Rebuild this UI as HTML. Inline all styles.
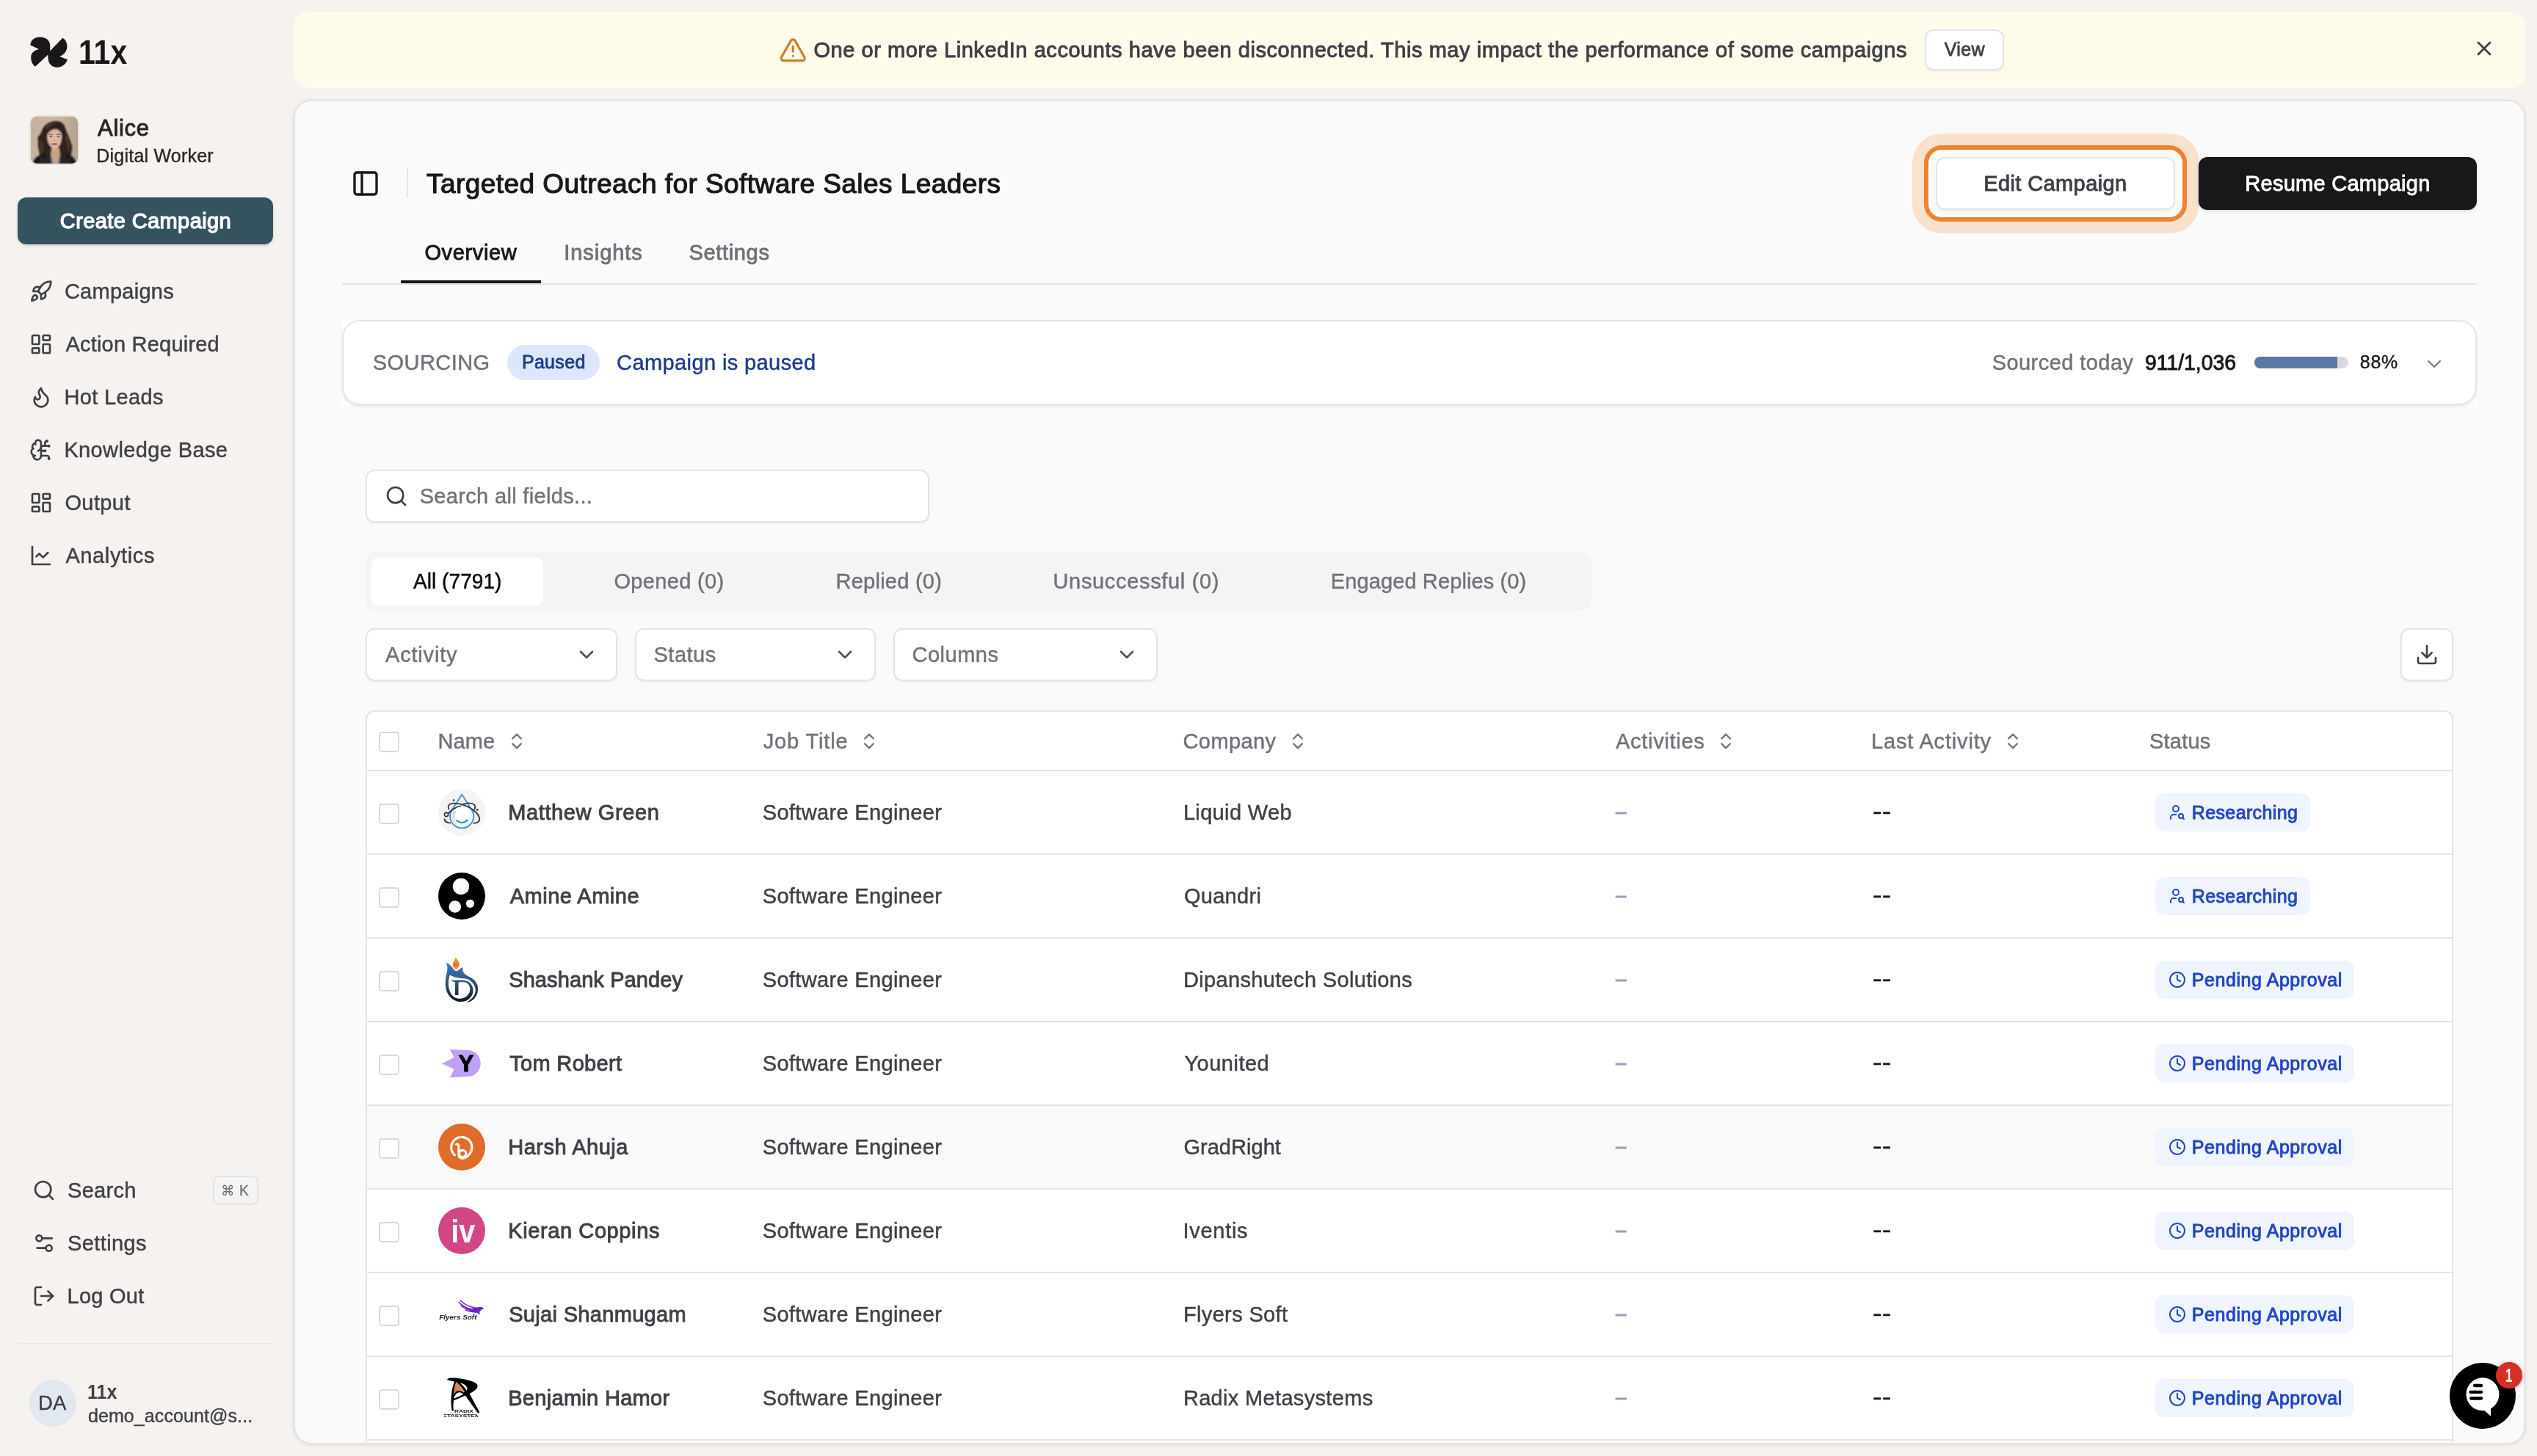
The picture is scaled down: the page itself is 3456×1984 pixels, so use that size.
<!DOCTYPE html>
<html lang="en"><head><meta charset="utf-8"><title>11x - Targeted Outreach for Software Sales Leaders</title>
<style>
*{margin:0;padding:0}
html,body{width:3456px;height:1984px;overflow:hidden;background:#f5f2ef;font-family:"Liberation Sans",sans-serif;}
#app{position:relative;width:3456px;height:1984px;overflow:hidden;will-change:transform}
.t{position:absolute;white-space:nowrap;line-height:1;font-weight:400}
h1{font-size:inherit;font-weight:inherit}
button{border:0;padding:0;font:inherit}
svg{display:block;overflow:visible}
</style></head>
<body><div id="app">
<aside>
<svg style="position:absolute;left:0px;top:0px;" width="120" height="120" viewBox="0 0 120 120"><path fill="#1a1718" d="M41.4,61.6 C41.4,55 47,50.6 54.6,50.6 C62,50.6 68.2,55 68.2,62 L68.2,69.5 L85.3,51.8 C89.5,54 91.4,58.5 91.4,63.7 C91.4,69 87.5,74.5 81.1,77 L91.9,81.1 C90,87.5 84.5,91.9 77.8,91.9 C70.5,91.9 65.4,86.5 65.4,77.8 L65.4,74.5 L48,90.7 C44,88 42.2,83 42.2,77.8 C42.2,72.5 46.5,68.5 53,67 Z"/></svg>
<span class="t" style="left:106.68px;top:47.00px;font-size:47px;color:#1a1718;font-weight:700;transform:scaleX(0.8736);transform-origin:0 0;">11x</span>
<svg style="position:absolute;left:40px;top:157px;" width="68" height="68" viewBox="0 0 68 68"><defs><linearGradient id="abg" x1="0" y1="0" x2="1" y2="0"><stop offset="0" stop-color="#c4b19d"/><stop offset=".5" stop-color="#cbb9a6"/><stop offset="1" stop-color="#b3a28e"/></linearGradient><filter id="ab" x="-20%" y="-20%" width="140%" height="140%"><feGaussianBlur stdDeviation="0.9"/></filter><filter id="ab2" x="-20%" y="-20%" width="140%" height="140%"><feGaussianBlur stdDeviation="0.5"/></filter><clipPath id="ac"><rect x="2" y="2" width="64" height="64" rx="8.5"/></clipPath></defs><rect x="0" y="0" width="68" height="68" rx="10.5" fill="#e9e0d6"/><g clip-path="url(#ac)"><g transform="translate(2 2)"><rect width="64" height="64" fill="url(#abg)"/><g filter="url(#ab)"><path fill="#2f211b" d="M34,6 C41,5.5 46,10 47.5,17 C49,23 52,26 53.5,32 C55,37 57,40 56,45 C55.5,50 54,56 53,64 L12,64 C11,58 12,54 11.5,49 C11,44 9,40 10,34 C9,30 9,27 12,25 C13.5,24 14,21 15.5,18 C18,11 25,6.5 34,6 Z"/><path fill="#4f372b" d="M13,30 C12,38 14,46 13,54 C16,50 17,44 17,38 Z M49,24 C52,32 54,40 52,50 C50,44 49,36 47,30 Z M20,14 C24,9 31,8 36,9 C30,10 25,13 22,18 Z"/><path fill="#0e1730" d="M3,64 C4,57 8,54 14,52 L26,49 L30,64 Z M61.5,64 C61,57 57,54 51,52 L40,49 L37,64 Z"/><path fill="#caa189" d="M28.5,42 L38.5,42 L40,52 L37,64 L30,64 L27,52 Z"/><path fill="#3d79a6" d="M26.5,53 L30,64 L27.5,64 Z M40.5,53 L37.5,64 L40,64 Z"/><path fill="#2f211b" d="M12,46 C13,52 17,58 22,64 L12,64 Z M27,46 C25,52 26,58 28,64 L20,64 C18,58 19,50 22,44 Z M40,45 C42,52 41,58 39,64 L48,64 C50,58 49,50 46,44 Z M54,46 C53,53 50,59 46,64 L54,64 Z"/><path fill="#dbb8a3" d="M32.5,14.5 C38,14.5 41.5,19 42,26 C42.3,32 41,37 38,40.5 C36,42.8 34,43.5 32.5,43.5 C31,43.5 29,42.8 27,40.5 C24,37 22,32 22.3,26 C22.8,19 27,14.5 32.5,14.5 Z"/><path fill="#2f211b" d="M21,27 C20.5,20 24,13 32,12.5 C40,12.5 44,19 43.5,27 C42,22 39,18 34,17 C28,17 23.5,21 21,27 Z"/></g><g filter="url(#ab2)"><ellipse cx="27.3" cy="26.8" rx="2" ry=".9" fill="#4a4a55"/><ellipse cx="37.4" cy="26.8" rx="2" ry=".9" fill="#4a4a55"/><path d="M24.5,24.6 Q27,23.4 30,24.4 M35,24.4 Q38,23.4 40.5,24.6" stroke="#3a2a22" stroke-width=".8" fill="none"/><ellipse cx="32.2" cy="37.4" rx="4.2" ry="1.3" fill="#b5626b"/><ellipse cx="32.4" cy="32.5" rx="1.4" ry=".8" fill="#c79a86"/></g></g></g></svg>
<span class="t" style="left:133.00px;top:159.00px;font-size:31px;color:#27272a;letter-spacing:0.700px;-webkit-text-stroke:0.96px #27272a;">Alice</span>
<span class="t" style="left:131.30px;top:200.00px;font-size:25px;color:#27272a;letter-spacing:0.215px;-webkit-text-stroke:0.39px #27272a;">Digital Worker</span>
<button style="position:absolute;left:24px;top:269px;width:348px;height:64px;border-radius:12px;background:#35525f;box-shadow:0 2px 4px rgba(0,0,0,.14);"></button>
<span class="t" style="left:81.80px;top:287.00px;font-size:29px;color:#ffffff;letter-spacing:0.400px;-webkit-text-stroke:1.25px #ffffff;">Create Campaign</span>
<nav>
<svg style="position:absolute;left:40px;top:381px;" width="32" height="32" viewBox="0 0 24 24" fill="none" stroke="#3f3f46" stroke-width="2" stroke-linecap="round" stroke-linejoin="round"><path d="M4.5 16.5c-1.5 1.26-2 5-2 5s3.74-.5 5-2c.71-.84.7-2.13-.09-2.91a2.18 2.18 0 0 0-2.91-.09z"/><path d="m12 15-3-3a22 22 0 0 1 2-3.95A12.88 12.88 0 0 1 22 2c0 2.72-.78 7.5-6 11a22.35 22.35 0 0 1-4 2z"/><path d="M9 12H4s.55-3.03 2-4c1.62-1.08 5 0 5 0"/><path d="M12 15v5s3.03-.55 4-2c1.08-1.62 0-5 0-5"/></svg>
<span class="t" style="left:87.90px;top:383.00px;font-size:29px;color:#3f3f46;letter-spacing:0.262px;-webkit-text-stroke:0.45px #3f3f46;">Campaigns</span>
<svg style="position:absolute;left:40px;top:453px;" width="32" height="32" viewBox="0 0 24 24" fill="none" stroke="#3f3f46" stroke-width="2" stroke-linecap="round" stroke-linejoin="round"><rect width="7" height="9" x="3" y="3" rx="1"/><rect width="7" height="5" x="14" y="3" rx="1"/><rect width="7" height="9" x="14" y="12" rx="1"/><rect width="7" height="5" x="3" y="16" rx="1"/></svg>
<span class="t" style="left:89.40px;top:455.00px;font-size:29px;color:#3f3f46;letter-spacing:0.214px;-webkit-text-stroke:0.45px #3f3f46;">Action Required</span>
<svg style="position:absolute;left:40px;top:525px;" width="32" height="32" viewBox="0 0 24 24" fill="none" stroke="#3f3f46" stroke-width="2" stroke-linecap="round" stroke-linejoin="round"><path d="M8.5 14.5A2.5 2.5 0 0 0 11 12c0-1.38-.5-2-1-3-1.072-2.143-.224-4.054 2-6 .5 2.5 2 4.9 4 6.5 2 1.6 3 3.5 3 5.5a7 7 0 1 1-14 0c0-1.153.433-2.294 1-3a2.5 2.5 0 0 0 2.5 2.5z"/></svg>
<span class="t" style="left:87.40px;top:527.00px;font-size:29px;color:#3f3f46;letter-spacing:0.375px;-webkit-text-stroke:0.45px #3f3f46;">Hot Leads</span>
<svg style="position:absolute;left:40px;top:597px;" width="32" height="32" viewBox="0 0 24 24" fill="none" stroke="#3f3f46" stroke-width="2" stroke-linecap="round" stroke-linejoin="round"><path d="M12 5a3 3 0 1 0-5.997.125 4 4 0 0 0-2.526 5.77 4 4 0 0 0 .556 6.588A4 4 0 1 0 12 18Z"/><path d="M9 13a4.5 4.5 0 0 0 3-4"/><path d="M6.003 5.125A3 3 0 0 0 6.401 6.5"/><path d="M3.477 10.896a4 4 0 0 1 .585-.396"/><path d="M6 18a4 4 0 0 1-1.967-.516"/><path d="M12 13h4"/><path d="M12 18h6a2 2 0 0 1 2 2v1"/><path d="M12 8h8"/><path d="M16 8V5a2 2 0 0 1 2-2"/><circle cx="16" cy="13" r=".5"/><circle cx="18" cy="3" r=".5"/><circle cx="20" cy="21" r=".5"/><circle cx="20" cy="8" r=".5"/></svg>
<span class="t" style="left:87.40px;top:599.00px;font-size:29px;color:#3f3f46;letter-spacing:0.377px;-webkit-text-stroke:0.45px #3f3f46;">Knowledge Base</span>
<svg style="position:absolute;left:40px;top:669px;" width="32" height="32" viewBox="0 0 24 24" fill="none" stroke="#3f3f46" stroke-width="2" stroke-linecap="round" stroke-linejoin="round"><rect width="7" height="9" x="3" y="3" rx="1"/><rect width="7" height="5" x="14" y="3" rx="1"/><rect width="7" height="9" x="14" y="12" rx="1"/><rect width="7" height="5" x="3" y="16" rx="1"/></svg>
<span class="t" style="left:88.40px;top:671.00px;font-size:29px;color:#3f3f46;letter-spacing:0.400px;-webkit-text-stroke:0.45px #3f3f46;">Output</span>
<svg style="position:absolute;left:40px;top:741px;" width="32" height="32" viewBox="0 0 24 24" fill="none" stroke="#3f3f46" stroke-width="2" stroke-linecap="round" stroke-linejoin="round"><path d="M3 3v18h18"/><path d="m19 9-5 5-4-4-3 3"/></svg>
<span class="t" style="left:89.40px;top:743.00px;font-size:29px;color:#3f3f46;letter-spacing:0.625px;-webkit-text-stroke:0.45px #3f3f46;">Analytics</span>
</nav><nav>
<svg style="position:absolute;left:44px;top:1606px;" width="32" height="32" viewBox="0 0 24 24" fill="none" stroke="#3f3f46" stroke-width="2" stroke-linecap="round" stroke-linejoin="round"><circle cx="11" cy="11" r="8"/><path d="m21 21-4.3-4.3"/></svg>
<span class="t" style="left:92.00px;top:1607.70px;font-size:29px;color:#3f3f46;letter-spacing:0.300px;-webkit-text-stroke:0.45px #3f3f46;">Search</span>
<svg style="position:absolute;left:44px;top:1678px;" width="32" height="32" viewBox="0 0 24 24" fill="none" stroke="#3f3f46" stroke-width="2" stroke-linecap="round" stroke-linejoin="round"><path d="M20 7h-9"/><path d="M14 17H5"/><circle cx="17" cy="17" r="3"/><circle cx="7" cy="7" r="3"/></svg>
<span class="t" style="left:92.00px;top:1679.70px;font-size:29px;color:#3f3f46;letter-spacing:0.386px;-webkit-text-stroke:0.45px #3f3f46;">Settings</span>
<svg style="position:absolute;left:44px;top:1750px;" width="32" height="32" viewBox="0 0 24 24" fill="none" stroke="#3f3f46" stroke-width="2" stroke-linecap="round" stroke-linejoin="round"><path d="M9 21H5a2 2 0 0 1-2-2V5a2 2 0 0 1 2-2h4"/><polyline points="16 17 21 12 16 7"/><line x1="21" x2="9" y1="12" y2="12"/></svg>
<span class="t" style="left:91.50px;top:1751.70px;font-size:29px;color:#3f3f46;letter-spacing:0.250px;-webkit-text-stroke:0.45px #3f3f46;">Log Out</span>
<div style="position:absolute;left:290px;top:1602px;width:62px;height:40px;border-radius:9px;background:#f4f4f5;border:2px solid #e4e4e7;box-sizing:border-box;"></div>
<span class="t" style="left:301.35px;top:1613.40px;font-size:19px;color:#71717a;font-family:'DejaVu Sans',sans-serif;transform:scaleX(0.9786);transform-origin:0 0;">⌘</span>
<span class="t" style="left:325.52px;top:1611.20px;font-size:21px;color:#71717a;transform:scaleX(0.9167);transform-origin:0 0;-webkit-text-stroke:0.33px #71717a;">K</span>
</nav>
<div style="position:absolute;left:24px;top:1830px;width:348px;height:2px;background:#e2e8f0;"></div>
<div style="position:absolute;left:40px;top:1880px;width:64px;height:64px;border-radius:50%;background:#e2e8f0;"></div>
<span class="t" style="left:52.33px;top:1898.40px;font-size:28px;color:#3f3f46;transform:scaleX(0.9838);transform-origin:0 0;-webkit-text-stroke:0.43px #3f3f46;">DA</span>
<span class="t" style="left:119.11px;top:1883.00px;font-size:28px;color:#3f3f46;font-weight:700;transform:scaleX(0.8941);transform-origin:0 0;">11x</span>
<span class="t" style="left:119.90px;top:1917.00px;font-size:25px;color:#3f3f46;letter-spacing:0.094px;-webkit-text-stroke:0.39px #3f3f46;">demo_account@s...</span>
</aside>
<section>
<div style="position:absolute;left:400px;top:16px;width:3040px;height:104px;border-radius:20px;background:#fffbeb;"></div>
<svg style="position:absolute;left:1060.8px;top:48.6px;" width="38.5" height="38.5" viewBox="0 0 24 24" fill="none" stroke="#d27d2a" stroke-width="2" stroke-linecap="round" stroke-linejoin="round"><path d="m21.73 18-8-14a2 2 0 0 0-3.48 0l-8 14A2 2 0 0 0 4 21h16a2 2 0 0 0 1.73-3Z"/><path d="M12 9v4"/><path d="M12 17h.01"/></svg>
<span class="t" style="left:1108.50px;top:54.00px;font-size:29px;color:#3f3f46;letter-spacing:0.553px;-webkit-text-stroke:0.9px #3f3f46;">One or more LinkedIn accounts have been disconnected. This may impact the performance of some campaigns</span>
<button style="position:absolute;left:2622px;top:40px;width:108px;height:56px;border-radius:12px;background:#fff;border:2px solid #e4e4e7;box-sizing:border-box;box-shadow:0 2px 3px rgba(0,0,0,.05);"></button>
<span class="t" style="left:2648.70px;top:55.20px;font-size:25px;color:#3f3f46;letter-spacing:0.367px;-webkit-text-stroke:0.78px #3f3f46;">View</span>
<svg style="position:absolute;left:3368px;top:50px;" width="32" height="32" viewBox="0 0 24 24" fill="none" stroke="#3f3f46" stroke-width="2" stroke-linecap="round" stroke-linejoin="round"><path d="M18 6 6 18"/><path d="m6 6 12 12"/></svg>
</section>
<main>
<div style="position:absolute;left:400px;top:136px;width:3040px;height:1832px;border-radius:24px;background:#fafafa;border:2px solid #e4e4e7;box-sizing:border-box;box-shadow:0 1px 5px rgba(0,0,0,.10);"></div>
<div style="position:absolute;left:402px;top:138px;width:3036px;height:1828px;border-radius:22px;overflow:hidden"><div style="position:absolute;left:-402px;top:-138px;width:3456px;height:1984px">
<svg style="position:absolute;left:478px;top:230px;" width="40" height="40" viewBox="0 0 24 24" fill="none" stroke="#18181b" stroke-width="2" stroke-linecap="round" stroke-linejoin="round"><rect width="18" height="18" x="3" y="3" rx="2"/><path d="M9 3v18"/></svg>
<div style="position:absolute;left:554px;top:230px;width:2px;height:39px;background:#e4e4e7;"></div>
<h1><span class="t" style="left:581.00px;top:232.00px;font-size:37px;color:#18181b;letter-spacing:0.442px;-webkit-text-stroke:1.15px #18181b;">Targeted Outreach for Software Sales Leaders</span></h1>
<div style="position:absolute;left:2605px;top:182px;width:391px;height:136px;border-radius:40px;background:#f8e1cd;"></div>
<div style="position:absolute;left:2621px;top:198px;width:358px;height:104px;border-radius:24px;background:#fafafa;border:6px solid #ee8230;box-sizing:border-box;"></div>
<button style="position:absolute;left:2637px;top:214px;width:326px;height:72px;border-radius:12px;background:#fff;border:2px solid #e4e4e7;box-sizing:border-box;box-shadow:0 2px 3px rgba(0,0,0,.05);"></button>
<span class="t" style="left:2702.30px;top:236.00px;font-size:29px;color:#3f3f46;letter-spacing:0.383px;-webkit-text-stroke:0.9px #3f3f46;">Edit Campaign</span>
<button style="position:absolute;left:2995px;top:214px;width:379px;height:72px;border-radius:12px;background:#18181b;box-shadow:0 2px 4px rgba(0,0,0,.15);"></button>
<span class="t" style="left:3058.30px;top:236.00px;font-size:29px;color:#ffffff;letter-spacing:0.271px;-webkit-text-stroke:0.9px #ffffff;">Resume Campaign</span>
<span class="t" style="left:578.40px;top:330.00px;font-size:29px;color:#18181b;letter-spacing:0.643px;-webkit-text-stroke:0.9px #18181b;">Overview</span>
<span class="t" style="left:768.30px;top:330.00px;font-size:29px;color:#71717a;letter-spacing:0.929px;-webkit-text-stroke:0.9px #71717a;">Insights</span>
<span class="t" style="left:938.50px;top:330.00px;font-size:29px;color:#71717a;letter-spacing:0.657px;-webkit-text-stroke:0.9px #71717a;">Settings</span>
<div style="position:absolute;left:466px;top:386px;width:2908px;height:2px;background:#e4e4e7;"></div>
<div style="position:absolute;left:546px;top:382px;width:191px;height:4px;background:#18181b;"></div>
<div style="position:absolute;left:466px;top:436px;width:2908px;height:116px;background:#fff;"></div>
<div style="position:absolute;left:466px;top:436px;width:2908px;height:116px;border-radius:24px;background:#fff;border:2px solid #e4e4e7;box-sizing:border-box;box-shadow:0 2px 4px rgba(0,0,0,.09);"></div>
<span class="t" style="left:507.80px;top:480.00px;font-size:29px;color:#71717a;letter-spacing:0.429px;-webkit-text-stroke:0.45px #71717a;">SOURCING</span>
<div style="position:absolute;left:691px;top:470px;width:126px;height:48px;border-radius:24px;background:#dce7fb;"></div>
<span class="t" style="left:710.90px;top:481.30px;font-size:25px;color:#1e3a8a;letter-spacing:0.320px;-webkit-text-stroke:0.78px #1e3a8a;">Paused</span>
<span class="t" style="left:840.10px;top:480.00px;font-size:29px;color:#1e3a8a;letter-spacing:0.394px;-webkit-text-stroke:0.45px #1e3a8a;">Campaign is paused</span>
<span class="t" style="left:2713.70px;top:480.00px;font-size:29px;color:#71717a;letter-spacing:0.442px;-webkit-text-stroke:0.45px #71717a;">Sourced today</span>
<span class="t" style="left:2922.42px;top:480.00px;font-size:29px;color:#18181b;transform:scaleX(0.9776);transform-origin:0 0;-webkit-text-stroke:0.9px #18181b;">911/1,036</span>
<div style="position:absolute;left:3071px;top:486px;width:128px;height:16px;border-radius:8px;background:#d8d8dd;overflow:hidden;"><div style="width:112.6px;height:16px;background:#5b78a4"></div></div>
<span class="t" style="left:3214.80px;top:481.30px;font-size:25px;color:#18181b;letter-spacing:0.750px;-webkit-text-stroke:0.39px #18181b;">88%</span>
<svg style="position:absolute;left:3299.5px;top:479.5px;" width="32" height="32" viewBox="0 0 24 24" fill="none" stroke="#71717a" stroke-width="1.5" stroke-linecap="round" stroke-linejoin="round"><path d="m6 9 6 6 6-6"/></svg>
<div style="position:absolute;left:498px;top:640px;width:768px;height:72px;border-radius:12px;background:#fff;border:2px solid #e4e4e7;box-sizing:border-box;box-shadow:0 2px 3px rgba(0,0,0,.05);"></div>
<svg style="position:absolute;left:524px;top:660px;" width="32" height="32" viewBox="0 0 24 24" fill="none" stroke="#3f3f46" stroke-width="2" stroke-linecap="round" stroke-linejoin="round"><circle cx="11" cy="11" r="8"/><path d="m21 21-4.3-4.3"/></svg>
<span class="t" style="left:571.70px;top:662.20px;font-size:29px;color:#71717a;letter-spacing:0.332px;-webkit-text-stroke:0.45px #71717a;">Search all fields...</span>
<div style="position:absolute;left:498px;top:752px;width:1670px;height:80px;border-radius:14px;background:#f4f4f5;"></div>
<div style="position:absolute;left:506px;top:760px;width:234px;height:64.5px;border-radius:10px;background:#fff;"></div>
<span class="t" style="left:562.80px;top:778.00px;font-size:29px;color:#09090b;transform:scaleX(0.9706);transform-origin:0 0;-webkit-text-stroke:0.45px #09090b;">All (7791)</span>
<span class="t" style="left:836.40px;top:778.00px;font-size:29px;color:#71717a;letter-spacing:0.333px;-webkit-text-stroke:0.45px #71717a;">Opened (0)</span>
<span class="t" style="left:1138.50px;top:778.00px;font-size:29px;color:#71717a;letter-spacing:0.250px;-webkit-text-stroke:0.45px #71717a;">Replied (0)</span>
<span class="t" style="left:1434.50px;top:778.00px;font-size:29px;color:#71717a;letter-spacing:0.667px;-webkit-text-stroke:0.45px #71717a;">Unsuccessful (0)</span>
<span class="t" style="left:1812.80px;top:778.00px;font-size:29px;color:#71717a;letter-spacing:0.111px;-webkit-text-stroke:0.45px #71717a;">Engaged Replies (0)</span>
<div style="position:absolute;left:498px;top:856px;width:343px;height:72px;border-radius:12px;background:#fff;border:2px solid #e4e4e7;box-sizing:border-box;box-shadow:0 2px 3px rgba(0,0,0,.05);"></div>
<span class="t" style="left:525.00px;top:878.00px;font-size:29px;color:#71717a;letter-spacing:0.814px;-webkit-text-stroke:0.45px #71717a;">Activity</span>
<svg style="position:absolute;left:783px;top:875.5px;" width="32" height="32" viewBox="0 0 24 24" fill="none" stroke="#52525b" stroke-width="2" stroke-linecap="round" stroke-linejoin="round"><path d="m6 9 6 6 6-6"/></svg>
<div style="position:absolute;left:865px;top:856px;width:328px;height:72px;border-radius:12px;background:#fff;border:2px solid #e4e4e7;box-sizing:border-box;box-shadow:0 2px 3px rgba(0,0,0,.05);"></div>
<span class="t" style="left:890.50px;top:878.00px;font-size:29px;color:#71717a;letter-spacing:0.500px;-webkit-text-stroke:0.45px #71717a;">Status</span>
<svg style="position:absolute;left:1135px;top:875.5px;" width="32" height="32" viewBox="0 0 24 24" fill="none" stroke="#52525b" stroke-width="2" stroke-linecap="round" stroke-linejoin="round"><path d="m6 9 6 6 6-6"/></svg>
<div style="position:absolute;left:1217px;top:856px;width:360px;height:72px;border-radius:12px;background:#fff;border:2px solid #e4e4e7;box-sizing:border-box;box-shadow:0 2px 3px rgba(0,0,0,.05);"></div>
<span class="t" style="left:1242.50px;top:878.00px;font-size:29px;color:#71717a;letter-spacing:0.500px;-webkit-text-stroke:0.45px #71717a;">Columns</span>
<svg style="position:absolute;left:1519px;top:875.5px;" width="32" height="32" viewBox="0 0 24 24" fill="none" stroke="#52525b" stroke-width="2" stroke-linecap="round" stroke-linejoin="round"><path d="m6 9 6 6 6-6"/></svg>
<div style="position:absolute;left:3270px;top:856px;width:72px;height:72px;border-radius:12px;background:#fff;border:2px solid #e4e4e7;box-sizing:border-box;box-shadow:0 2px 3px rgba(0,0,0,.05);"></div>
<svg style="position:absolute;left:3290px;top:876px;" width="32" height="32" viewBox="0 0 24 24" fill="none" stroke="#3f3f46" stroke-width="2" stroke-linecap="round" stroke-linejoin="round"><path d="M21 15v4a2 2 0 0 1-2 2H5a2 2 0 0 1-2-2v-4"/><polyline points="7 10 12 15 17 10"/><line x1="12" x2="12" y1="15" y2="3"/></svg>
<section>
<div style="position:absolute;left:498px;top:968px;width:2844px;height:1100px;border-radius:12px;background:#fff;border:2px solid #e4e4e7;box-sizing:border-box;"></div>
<div style="position:absolute;left:500px;top:1507px;width:2840px;height:112px;background:#f9f9fa;"></div>
<div style="position:absolute;left:500px;top:1049px;width:2840px;height:2px;background:#e4e4e7;"></div>
<div style="position:absolute;left:500px;top:1163px;width:2840px;height:2px;background:#e4e4e7;"></div>
<div style="position:absolute;left:500px;top:1277px;width:2840px;height:2px;background:#e4e4e7;"></div>
<div style="position:absolute;left:500px;top:1391px;width:2840px;height:2px;background:#e4e4e7;"></div>
<div style="position:absolute;left:500px;top:1505px;width:2840px;height:2px;background:#e4e4e7;"></div>
<div style="position:absolute;left:500px;top:1619px;width:2840px;height:2px;background:#e4e4e7;"></div>
<div style="position:absolute;left:500px;top:1733px;width:2840px;height:2px;background:#e4e4e7;"></div>
<div style="position:absolute;left:500px;top:1847px;width:2840px;height:2px;background:#e4e4e7;"></div>
<div style="position:absolute;left:500px;top:1961px;width:2840px;height:2px;background:#e4e4e7;"></div>
<div style="position:absolute;left:516.4px;top:997.3px;width:27.4px;height:27.4px;border-radius:4.5px;background:#fff;border:2px solid #d8d8dd;box-sizing:border-box;"></div>
<span class="t" style="left:596.40px;top:996.00px;font-size:29px;color:#71717a;letter-spacing:0.167px;-webkit-text-stroke:0.45px #71717a;">Name</span>
<svg style="position:absolute;left:689.9px;top:996.3px;" width="28" height="28" viewBox="0 0 24 24" fill="none" stroke="#71717a" stroke-width="2" stroke-linecap="round" stroke-linejoin="round"><path d="m7 15 5 5 5-5"/><path d="m7 9 5-5 5 5"/></svg>
<span class="t" style="left:1039.70px;top:996.00px;font-size:29px;color:#71717a;letter-spacing:0.863px;-webkit-text-stroke:0.45px #71717a;">Job Title</span>
<svg style="position:absolute;left:1169.5px;top:996.3px;" width="28" height="28" viewBox="0 0 24 24" fill="none" stroke="#71717a" stroke-width="2" stroke-linecap="round" stroke-linejoin="round"><path d="m7 15 5 5 5-5"/><path d="m7 9 5-5 5 5"/></svg>
<span class="t" style="left:1611.50px;top:996.00px;font-size:29px;color:#71717a;letter-spacing:0.417px;-webkit-text-stroke:0.45px #71717a;">Company</span>
<svg style="position:absolute;left:1754px;top:996.3px;" width="28" height="28" viewBox="0 0 24 24" fill="none" stroke="#71717a" stroke-width="2" stroke-linecap="round" stroke-linejoin="round"><path d="m7 15 5 5 5-5"/><path d="m7 9 5-5 5 5"/></svg>
<span class="t" style="left:2201.00px;top:996.00px;font-size:29px;color:#71717a;letter-spacing:0.700px;-webkit-text-stroke:0.45px #71717a;">Activities</span>
<svg style="position:absolute;left:2337px;top:996.3px;" width="28" height="28" viewBox="0 0 24 24" fill="none" stroke="#71717a" stroke-width="2" stroke-linecap="round" stroke-linejoin="round"><path d="m7 15 5 5 5-5"/><path d="m7 9 5-5 5 5"/></svg>
<span class="t" style="left:2549.00px;top:996.00px;font-size:29px;color:#71717a;letter-spacing:0.833px;-webkit-text-stroke:0.45px #71717a;">Last Activity</span>
<svg style="position:absolute;left:2728px;top:996.3px;" width="28" height="28" viewBox="0 0 24 24" fill="none" stroke="#71717a" stroke-width="2" stroke-linecap="round" stroke-linejoin="round"><path d="m7 15 5 5 5-5"/><path d="m7 9 5-5 5 5"/></svg>
<span class="t" style="left:2928.00px;top:996.00px;font-size:29px;color:#71717a;letter-spacing:0.200px;-webkit-text-stroke:0.45px #71717a;">Status</span>
<div style="position:absolute;left:516.4px;top:1095.3px;width:27.4px;height:27.4px;border-radius:4.5px;background:#fff;border:2px solid #d8d8dd;box-sizing:border-box;"></div>
<svg style="position:absolute;left:597.2px;top:1075px;" width="64" height="64" viewBox="0 0 64 64"><circle cx="32" cy="32" r="32" fill="#f4f4f5"/><g fill="none" stroke-linecap="round" stroke-linejoin="round"><circle cx="32" cy="38" r="15.6" fill="#ffffff" stroke="none"/><path d="M20.5,30 C17.5,38 19.5,47 26.5,52 C22.5,46 21.5,38 24.5,30 Z" fill="#dedee1" stroke="none"/><path d="M32.2,7.6 L18.8,28.6 A16,16 0 1 0 45.6,28.6 Z" stroke="#3a95d9" stroke-width="1.9"/><path d="M24.8,42.8 Q32.2,49.5 39.6,42.4" stroke="#3a8fd6" stroke-width="2.1"/><path d="M16.2,46.4 C12,46 8.5,44.5 8.6,41.2 M12.8,34.5 C17,29 25,24 30.5,23.4 M14.5,27.5 C12.5,23.5 14.5,20.5 19,19.9 C29,18.4 44,24 52.5,33 C57,38 57.5,43.5 53.5,45.5 C52,46.3 50.3,46.7 48.5,46.8 M32,21.5 C38,19.3 44.5,18.8 48,20.8 C50.5,22.3 50.8,25 49.3,27.6" stroke="#3b3b3d" stroke-width="1.9"/><circle cx="11" cy="35" r="2.6" fill="#fff" stroke="#3b3b3d" stroke-width="1.7"/><circle cx="21" cy="15.4" r="1.3" fill="#3b3b3d"/><circle cx="53.2" cy="28.5" r="1.4" fill="#3b3b3d"/></g></svg>
<span class="t" style="left:692.20px;top:1093.00px;font-size:29px;color:#3f3f46;letter-spacing:0.625px;-webkit-text-stroke:0.9px #3f3f46;">Matthew Green</span>
<span class="t" style="left:1038.70px;top:1093.00px;font-size:29px;color:#3f3f46;letter-spacing:0.350px;-webkit-text-stroke:0.45px #3f3f46;">Software Engineer</span>
<span class="t" style="left:1611.90px;top:1093.00px;font-size:29px;color:#3f3f46;letter-spacing:0.344px;-webkit-text-stroke:0.45px #3f3f46;">Liquid Web</span>
<span class="t" style="left:2200.64px;top:1092.00px;font-size:29px;color:#94a3b8;transform:scaleX(0.8824);transform-origin:0 0;-webkit-text-stroke:0.9px #94a3b8;">–</span>
<span class="t" style="left:2550.69px;top:1092.00px;font-size:29px;color:#18181b;transform:scaleX(1.3143);transform-origin:0 0;-webkit-text-stroke:0.45px #18181b;">--</span>
<div style="position:absolute;left:2936px;top:1081px;width:211px;height:52px;border-radius:12px;background:#eff4fe;"></div>
<svg style="position:absolute;left:2954px;top:1095px;" width="24" height="24" viewBox="0 0 24 24" fill="none" stroke="#2347c5" stroke-width="2" stroke-linecap="round" stroke-linejoin="round"><circle cx="10" cy="7" r="4"/><path d="M10.3 15H7a4 4 0 0 0-4 4v2"/><circle cx="17" cy="17" r="3"/><path d="m21 21-1.9-1.9"/></svg>
<span class="t" style="left:2985.80px;top:1094.60px;font-size:25px;color:#2347c5;letter-spacing:0.370px;-webkit-text-stroke:0.95px #2347c5;">Researching</span>
<div style="position:absolute;left:516.4px;top:1209.3px;width:27.4px;height:27.4px;border-radius:4.5px;background:#fff;border:2px solid #d8d8dd;box-sizing:border-box;"></div>
<svg style="position:absolute;left:597.2px;top:1189px;" width="64" height="64" viewBox="0 0 64 64"><circle cx="32" cy="32" r="32" fill="#000"/><circle cx="31" cy="18.9" r="11.2" fill="#fcfcfc"/><circle cx="22.8" cy="46.5" r="8.3" fill="#fcfcfc"/><circle cx="43.4" cy="42.3" r="5.6" fill="#fcfcfc"/></svg>
<span class="t" style="left:694.70px;top:1207.00px;font-size:29px;color:#3f3f46;letter-spacing:0.500px;-webkit-text-stroke:0.9px #3f3f46;">Amine Amine</span>
<span class="t" style="left:1038.70px;top:1207.00px;font-size:29px;color:#3f3f46;letter-spacing:0.350px;-webkit-text-stroke:0.45px #3f3f46;">Software Engineer</span>
<span class="t" style="left:1612.90px;top:1207.00px;font-size:29px;color:#3f3f46;letter-spacing:0.300px;-webkit-text-stroke:0.45px #3f3f46;">Quandri</span>
<span class="t" style="left:2200.64px;top:1206.00px;font-size:29px;color:#94a3b8;transform:scaleX(0.8824);transform-origin:0 0;-webkit-text-stroke:0.9px #94a3b8;">–</span>
<span class="t" style="left:2550.69px;top:1206.00px;font-size:29px;color:#18181b;transform:scaleX(1.3143);transform-origin:0 0;-webkit-text-stroke:0.45px #18181b;">--</span>
<div style="position:absolute;left:2936px;top:1195px;width:211px;height:52px;border-radius:12px;background:#eff4fe;"></div>
<svg style="position:absolute;left:2954px;top:1209px;" width="24" height="24" viewBox="0 0 24 24" fill="none" stroke="#2347c5" stroke-width="2" stroke-linecap="round" stroke-linejoin="round"><circle cx="10" cy="7" r="4"/><path d="M10.3 15H7a4 4 0 0 0-4 4v2"/><circle cx="17" cy="17" r="3"/><path d="m21 21-1.9-1.9"/></svg>
<span class="t" style="left:2985.80px;top:1208.60px;font-size:25px;color:#2347c5;letter-spacing:0.370px;-webkit-text-stroke:0.95px #2347c5;">Researching</span>
<div style="position:absolute;left:516.4px;top:1323.3px;width:27.4px;height:27.4px;border-radius:4.5px;background:#fff;border:2px solid #d8d8dd;box-sizing:border-box;"></div>
<svg style="position:absolute;left:597.2px;top:1303px;" width="64" height="64" viewBox="0 0 64 64"><defs><linearGradient id="dg" x1="0" y1="0" x2="0" y2="1"><stop offset="0" stop-color="#3f79bd"/><stop offset=".45" stop-color="#34567f"/><stop offset="1" stop-color="#12151b"/></linearGradient><linearGradient id="df" x1="0" y1="0" x2="0" y2="1"><stop offset="0" stop-color="#f6b21f"/><stop offset=".6" stop-color="#ee6a2c"/><stop offset="1" stop-color="#f7a541"/></linearGradient></defs><path fill="url(#df)" d="M23.1,1.5 C27,5 29,8.5 28.6,11.5 C28.3,14.5 26.5,17 24.2,18.3 C21.5,17 19.7,14.5 19.9,11.5 C20.2,8 22.5,5.5 23.1,1.5 Z"/><path fill="url(#dg)" d="M10,9.2 C14,9.5 17,12 19.3,15.6 C21,18.3 22.5,20.2 24.5,20.2 C27,20.2 30,16.5 33.5,14.8 C33,17.5 33.2,19.5 34.2,21.4 C36.5,25.5 40.5,27 44.1,28.9 C48.5,31.2 52,34.5 53.4,39.5 C55,45 54,52 49.1,57.8 C46,61 42,62.6 37.9,63.2 C42,61 46,58 48.2,54.5 C50.5,51 51.5,46.5 50.2,42.5 C48.5,37.5 44.5,33 39.9,31.3 C36,30 32,30.3 27.5,29.6 C23,28.8 19,27.5 15.9,25.5 C14.5,29.5 13.7,34 13.9,38 C14.2,43 15,47 17,50.5 C19.5,55 24,57.8 29.2,57.8 C33,57.8 36.5,56.5 39,54.3 C42,51.6 43.5,48 43.3,44 C43,40 41,36.8 37.5,35.7 C35,35 32,35.2 27.5,35.4 L27.5,52.9 L23,52.9 L23,35.4 C21,35 18.8,34 16.8,32.3 C21,33.2 26,32.6 31,32.6 C36,32.6 40.5,33.5 43.8,37 C47,40.5 48.3,45 47.3,49.5 C46,55 42,59.5 36.5,61.3 C31,63 24.5,62 19.5,58.5 C14.5,55 11.5,49.5 10.3,43.5 C9.3,38 9.7,32 10.8,26.5 C12,21 13,16.5 12.2,13 C11.8,11.5 11,10.2 10,9.2 Z"/></svg>
<span class="t" style="left:693.20px;top:1321.00px;font-size:29px;color:#3f3f46;letter-spacing:0.100px;-webkit-text-stroke:0.9px #3f3f46;">Shashank Pandey</span>
<span class="t" style="left:1038.70px;top:1321.00px;font-size:29px;color:#3f3f46;letter-spacing:0.350px;-webkit-text-stroke:0.45px #3f3f46;">Software Engineer</span>
<span class="t" style="left:1611.90px;top:1321.00px;font-size:29px;color:#3f3f46;letter-spacing:0.343px;-webkit-text-stroke:0.45px #3f3f46;">Dipanshutech Solutions</span>
<span class="t" style="left:2200.64px;top:1320.00px;font-size:29px;color:#94a3b8;transform:scaleX(0.8824);transform-origin:0 0;-webkit-text-stroke:0.9px #94a3b8;">–</span>
<span class="t" style="left:2550.69px;top:1320.00px;font-size:29px;color:#18181b;transform:scaleX(1.3143);transform-origin:0 0;-webkit-text-stroke:0.45px #18181b;">--</span>
<div style="position:absolute;left:2936px;top:1309px;width:271px;height:52px;border-radius:12px;background:#eff4fe;"></div>
<svg style="position:absolute;left:2954px;top:1323px;" width="24" height="24" viewBox="0 0 24 24" fill="none" stroke="#2347c5" stroke-width="2" stroke-linecap="round" stroke-linejoin="round"><circle cx="12" cy="12" r="10"/><polyline points="12 6 12 12 16 14"/></svg>
<span class="t" style="left:2985.80px;top:1322.60px;font-size:25px;color:#2347c5;letter-spacing:0.567px;-webkit-text-stroke:0.95px #2347c5;">Pending Approval</span>
<div style="position:absolute;left:516.4px;top:1437.3px;width:27.4px;height:27.4px;border-radius:4.5px;background:#fff;border:2px solid #d8d8dd;box-sizing:border-box;"></div>
<svg style="position:absolute;left:597.2px;top:1417px;" width="64" height="64" viewBox="0 0 64 64"><path fill="#bea1f6" d="M15.9,13 L39.9,14.1 C50,14.1 57.7,22 57.7,32.2 C57.7,42 50,50 39.9,50 L15.9,51.2 L21.7,40 L5,32.2 L21.7,23.9 Z"/><text x="37.9" y="43.4" text-anchor="middle" font-family="Liberation Sans, sans-serif" font-weight="700" font-size="30.5" fill="#000" stroke="#000" stroke-width="1.1" stroke-linejoin="round">Y</text></svg>
<span class="t" style="left:694.20px;top:1435.00px;font-size:29px;color:#3f3f46;letter-spacing:0.333px;-webkit-text-stroke:0.9px #3f3f46;">Tom Robert</span>
<span class="t" style="left:1038.70px;top:1435.00px;font-size:29px;color:#3f3f46;letter-spacing:0.350px;-webkit-text-stroke:0.45px #3f3f46;">Software Engineer</span>
<span class="t" style="left:1613.40px;top:1435.00px;font-size:29px;color:#3f3f46;letter-spacing:0.500px;-webkit-text-stroke:0.45px #3f3f46;">Younited</span>
<span class="t" style="left:2200.64px;top:1434.00px;font-size:29px;color:#94a3b8;transform:scaleX(0.8824);transform-origin:0 0;-webkit-text-stroke:0.9px #94a3b8;">–</span>
<span class="t" style="left:2550.69px;top:1434.00px;font-size:29px;color:#18181b;transform:scaleX(1.3143);transform-origin:0 0;-webkit-text-stroke:0.45px #18181b;">--</span>
<div style="position:absolute;left:2936px;top:1423px;width:271px;height:52px;border-radius:12px;background:#eff4fe;"></div>
<svg style="position:absolute;left:2954px;top:1437px;" width="24" height="24" viewBox="0 0 24 24" fill="none" stroke="#2347c5" stroke-width="2" stroke-linecap="round" stroke-linejoin="round"><circle cx="12" cy="12" r="10"/><polyline points="12 6 12 12 16 14"/></svg>
<span class="t" style="left:2985.80px;top:1436.60px;font-size:25px;color:#2347c5;letter-spacing:0.567px;-webkit-text-stroke:0.95px #2347c5;">Pending Approval</span>
<div style="position:absolute;left:516.4px;top:1551.3px;width:27.4px;height:27.4px;border-radius:4.5px;background:#fff;border:2px solid #d8d8dd;box-sizing:border-box;"></div>
<svg style="position:absolute;left:597.2px;top:1531px;" width="64" height="64" viewBox="0 0 64 64"><circle cx="32" cy="32" r="32" fill="#e06c29"/><g fill="none" stroke="#fbf6ec" stroke-width="3.3" stroke-linecap="round" stroke-linejoin="round"><path d="M22.3,42.9 A14.1,14.1 0 1 1 42.6,41.6 C40,45 36,47.3 32.8,47.3 C29.3,47.3 27.9,45 27.9,42 L27.9,30.4 C27.9,28.2 26.2,27.6 24.5,28.4"/><circle cx="33.1" cy="41" r="4.7"/></g></svg>
<span class="t" style="left:692.20px;top:1549.00px;font-size:29px;color:#3f3f46;letter-spacing:0.530px;-webkit-text-stroke:0.9px #3f3f46;">Harsh Ahuja</span>
<span class="t" style="left:1038.70px;top:1549.00px;font-size:29px;color:#3f3f46;letter-spacing:0.350px;-webkit-text-stroke:0.45px #3f3f46;">Software Engineer</span>
<span class="t" style="left:1612.40px;top:1549.00px;font-size:29px;color:#3f3f46;letter-spacing:0.038px;-webkit-text-stroke:0.45px #3f3f46;">GradRight</span>
<span class="t" style="left:2200.64px;top:1548.00px;font-size:29px;color:#94a3b8;transform:scaleX(0.8824);transform-origin:0 0;-webkit-text-stroke:0.9px #94a3b8;">–</span>
<span class="t" style="left:2550.69px;top:1548.00px;font-size:29px;color:#18181b;transform:scaleX(1.3143);transform-origin:0 0;-webkit-text-stroke:0.45px #18181b;">--</span>
<div style="position:absolute;left:2936px;top:1537px;width:271px;height:52px;border-radius:12px;background:#eff4fe;"></div>
<svg style="position:absolute;left:2954px;top:1551px;" width="24" height="24" viewBox="0 0 24 24" fill="none" stroke="#2347c5" stroke-width="2" stroke-linecap="round" stroke-linejoin="round"><circle cx="12" cy="12" r="10"/><polyline points="12 6 12 12 16 14"/></svg>
<span class="t" style="left:2985.80px;top:1550.60px;font-size:25px;color:#2347c5;letter-spacing:0.567px;-webkit-text-stroke:0.95px #2347c5;">Pending Approval</span>
<div style="position:absolute;left:516.4px;top:1665.3px;width:27.4px;height:27.4px;border-radius:4.5px;background:#fff;border:2px solid #d8d8dd;box-sizing:border-box;"></div>
<svg style="position:absolute;left:597.2px;top:1645px;" width="64" height="64" viewBox="0 0 64 64"><circle cx="32" cy="32" r="32" fill="#d34685"/><text x="17.2" y="48.3" textLength="33" lengthAdjust="spacingAndGlyphs" font-family="Liberation Sans, sans-serif" font-weight="700" font-size="44" fill="#fff">iv</text></svg>
<span class="t" style="left:692.20px;top:1663.00px;font-size:29px;color:#3f3f46;letter-spacing:0.608px;-webkit-text-stroke:0.9px #3f3f46;">Kieran Coppins</span>
<span class="t" style="left:1038.70px;top:1663.00px;font-size:29px;color:#3f3f46;letter-spacing:0.350px;-webkit-text-stroke:0.45px #3f3f46;">Software Engineer</span>
<span class="t" style="left:1611.40px;top:1663.00px;font-size:29px;color:#3f3f46;letter-spacing:0.733px;-webkit-text-stroke:0.45px #3f3f46;">Iventis</span>
<span class="t" style="left:2200.64px;top:1662.00px;font-size:29px;color:#94a3b8;transform:scaleX(0.8824);transform-origin:0 0;-webkit-text-stroke:0.9px #94a3b8;">–</span>
<span class="t" style="left:2550.69px;top:1662.00px;font-size:29px;color:#18181b;transform:scaleX(1.3143);transform-origin:0 0;-webkit-text-stroke:0.45px #18181b;">--</span>
<div style="position:absolute;left:2936px;top:1651px;width:271px;height:52px;border-radius:12px;background:#eff4fe;"></div>
<svg style="position:absolute;left:2954px;top:1665px;" width="24" height="24" viewBox="0 0 24 24" fill="none" stroke="#2347c5" stroke-width="2" stroke-linecap="round" stroke-linejoin="round"><circle cx="12" cy="12" r="10"/><polyline points="12 6 12 12 16 14"/></svg>
<span class="t" style="left:2985.80px;top:1664.60px;font-size:25px;color:#2347c5;letter-spacing:0.567px;-webkit-text-stroke:0.95px #2347c5;">Pending Approval</span>
<div style="position:absolute;left:516.4px;top:1779.3px;width:27.4px;height:27.4px;border-radius:4.5px;background:#fff;border:2px solid #d8d8dd;box-sizing:border-box;"></div>
<svg style="position:absolute;left:597.2px;top:1759px;" width="64" height="64" viewBox="0 0 64 64"><g fill="none" stroke="#6d22c9" stroke-width="1.5" stroke-linecap="round"><path d="M30.3,13.2 C35,18 42,21.5 50.5,23.3"/><path d="M28.2,15.4 C33,21 41,24.6 49.5,25.6"/><path d="M31,20.2 C36,24.3 42.5,26.6 49.5,27.6"/><path d="M37,25.8 C41,27.8 46,28.7 51,28.9"/></g><path fill="#6d22c9" d="M44,24.8 C48,23.4 51,22.2 54.5,22.2 C57.5,21.5 60,22 61,23.3 L62.3,24.5 L59.8,25 C58.5,26.5 56.8,27.4 56.3,28.7 C56.5,30.2 56.6,31.5 56.1,32.8 C55,30.7 53.3,29.5 50.8,29.4 C48,29.2 45,28 43,26.5 Z"/><text x="1.2" y="38.9" textLength="51.3" lengthAdjust="spacingAndGlyphs" font-family="Liberation Sans, sans-serif" font-style="italic" font-weight="700" font-size="9.6" fill="#232323">Flyers Soft</text></svg>
<span class="t" style="left:693.20px;top:1777.00px;font-size:29px;color:#3f3f46;letter-spacing:0.321px;-webkit-text-stroke:0.9px #3f3f46;">Sujai Shanmugam</span>
<span class="t" style="left:1038.70px;top:1777.00px;font-size:29px;color:#3f3f46;letter-spacing:0.350px;-webkit-text-stroke:0.45px #3f3f46;">Software Engineer</span>
<span class="t" style="left:1611.90px;top:1777.00px;font-size:29px;color:#3f3f46;letter-spacing:0.360px;-webkit-text-stroke:0.45px #3f3f46;">Flyers Soft</span>
<span class="t" style="left:2200.64px;top:1776.00px;font-size:29px;color:#94a3b8;transform:scaleX(0.8824);transform-origin:0 0;-webkit-text-stroke:0.9px #94a3b8;">–</span>
<span class="t" style="left:2550.69px;top:1776.00px;font-size:29px;color:#18181b;transform:scaleX(1.3143);transform-origin:0 0;-webkit-text-stroke:0.45px #18181b;">--</span>
<div style="position:absolute;left:2936px;top:1765px;width:271px;height:52px;border-radius:12px;background:#eff4fe;"></div>
<svg style="position:absolute;left:2954px;top:1779px;" width="24" height="24" viewBox="0 0 24 24" fill="none" stroke="#2347c5" stroke-width="2" stroke-linecap="round" stroke-linejoin="round"><circle cx="12" cy="12" r="10"/><polyline points="12 6 12 12 16 14"/></svg>
<span class="t" style="left:2985.80px;top:1778.60px;font-size:25px;color:#2347c5;letter-spacing:0.567px;-webkit-text-stroke:0.95px #2347c5;">Pending Approval</span>
<div style="position:absolute;left:516.4px;top:1893.3px;width:27.4px;height:27.4px;border-radius:4.5px;background:#fff;border:2px solid #d8d8dd;box-sizing:border-box;"></div>
<svg style="position:absolute;left:597.2px;top:1873px;" width="64" height="64" viewBox="0 0 64 64"><defs><linearGradient id="rg" x1="0" y1="0" x2="1" y2="0"><stop offset="0" stop-color="#d27027"/><stop offset="1" stop-color="#e2a77f"/></linearGradient><clipPath id="rc"><rect x="8" y="52" width="46.2" height="8"/></clipPath></defs><path fill="url(#rg)" d="M22.6,11 L29.5,12.8 L37,23.4 L33.3,25.6 C30.5,23.2 27.5,23 25,25 C22.5,27.2 20.5,30.5 19.5,34.5 C18.2,27 19,18 22.6,11 Z"/><path fill="#e6b48f" d="M37.5,27.5 L40.6,26.6 L47,38.5 Z"/><path fill="#000" d="M11.6,7.3 C13,5.6 14.8,4.5 16.6,4.4 C26,4.4 38,6 47.4,9.8 C51.5,11.5 53.9,13.5 53.6,16 C53.3,19 50.5,21.5 47,23.4 C45.2,24.4 43.7,25.2 42.5,26 L56.3,51.5 L54.2,53 L36.8,28.6 C32,31 26.5,33.4 21,35.2 C20.3,40 20.3,45 21,49.6 L18.6,49.8 C17.3,42 17,33 18.3,24.5 C19.1,18.5 20.3,13.5 22.3,9.7 C18.7,9 15,8.2 11.6,7.3 Z M24.4,10.3 C22,15 20.9,21.5 20.7,28.5 C21.5,26 23.5,23.5 26,22.4 C29,21.2 32,22.2 34.4,24.6 L35.9,23.7 C33,18.5 29,13.5 24.4,10.3 Z M21,32.7 C25.5,31.2 30,29.2 34.3,26.8 C32,24.3 29,23.4 26.5,24.8 C23.8,26.3 21.9,29.3 21,32.7 Z M29.5,11.2 C33,14 36.2,17.6 38.5,21.8 C39.5,20.7 39.8,19.3 39.3,17.8 C38,14.7 34,12.3 29.5,11.2 Z" fill-rule="evenodd"/><text x="22.1" y="51.9" textLength="25.6" lengthAdjust="spacingAndGlyphs" font-family="Liberation Sans, sans-serif" font-weight="700" font-size="5.4" fill="#111">RADIX</text><g clip-path="url(#rc)"><text x="-0.6" y="57.9" textLength="63.2" lengthAdjust="spacingAndGlyphs" font-family="Liberation Sans, sans-serif" font-weight="700" font-size="5.4" fill="#111">METASYSTEMS</text></g></svg>
<span class="t" style="left:692.20px;top:1891.00px;font-size:29px;color:#3f3f46;letter-spacing:0.308px;-webkit-text-stroke:0.9px #3f3f46;">Benjamin Hamor</span>
<span class="t" style="left:1038.70px;top:1891.00px;font-size:29px;color:#3f3f46;letter-spacing:0.350px;-webkit-text-stroke:0.45px #3f3f46;">Software Engineer</span>
<span class="t" style="left:1611.90px;top:1891.00px;font-size:29px;color:#3f3f46;letter-spacing:0.331px;-webkit-text-stroke:0.45px #3f3f46;">Radix Metasystems</span>
<span class="t" style="left:2200.64px;top:1890.00px;font-size:29px;color:#94a3b8;transform:scaleX(0.8824);transform-origin:0 0;-webkit-text-stroke:0.9px #94a3b8;">–</span>
<span class="t" style="left:2550.69px;top:1890.00px;font-size:29px;color:#18181b;transform:scaleX(1.3143);transform-origin:0 0;-webkit-text-stroke:0.45px #18181b;">--</span>
<div style="position:absolute;left:2936px;top:1879px;width:271px;height:52px;border-radius:12px;background:#eff4fe;"></div>
<svg style="position:absolute;left:2954px;top:1893px;" width="24" height="24" viewBox="0 0 24 24" fill="none" stroke="#2347c5" stroke-width="2" stroke-linecap="round" stroke-linejoin="round"><circle cx="12" cy="12" r="10"/><polyline points="12 6 12 12 16 14"/></svg>
<span class="t" style="left:2985.80px;top:1892.60px;font-size:25px;color:#2347c5;letter-spacing:0.567px;-webkit-text-stroke:0.95px #2347c5;">Pending Approval</span>
</section>
</div></div>
</main>
<svg style="position:absolute;left:3337px;top:1857px;" width="90" height="90" viewBox="0 0 90 90"><circle cx="45" cy="45" r="45" fill="#000"/><circle cx="45" cy="42.8" r="22.5" fill="#fff"/><path fill="#fff" d="M46,64 L56,72.6 L56,59 Z"/><g stroke="#000" stroke-width="4.3" stroke-linecap="round"><path d="M34,31 L43.1,31"/><path d="M28.3,39.8 L43.1,39.8"/><path d="M29.1,48.5 L43.1,48.5"/></g></svg>
<div style="position:absolute;left:3400px;top:1856px;width:36px;height:36px;border-radius:50%;background:#d63025;box-shadow:0 1px 4px rgba(0,0,0,.35);"></div>
<span class="t" style="left:3412.60px;top:1862.00px;font-size:25px;color:#fff;font-weight:700;transform:scaleX(0.6696);transform-origin:0 0;">1</span>
</div></body></html>
